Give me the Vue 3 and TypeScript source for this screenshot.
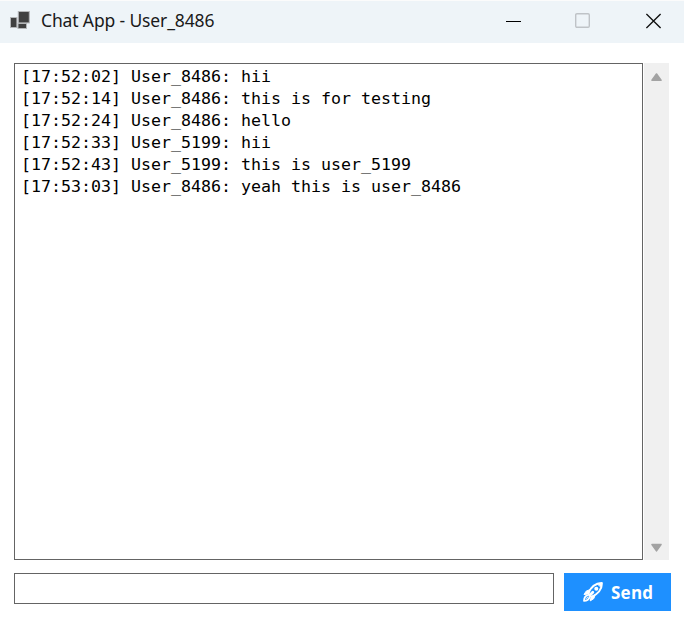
<script setup lang="ts">
import { ref } from 'vue'

interface Message {
  time: string
  user: string
  text: string
}

const title = 'Chat App - User_8486'
const draft = ref('')
const messages = ref<Message[]>([
  { time: '17:52:02', user: 'User_8486', text: 'hii' },
  { time: '17:52:14', user: 'User_8486', text: 'this is for testing' },
  { time: '17:52:24', user: 'User_8486', text: 'hello' },
  { time: '17:52:33', user: 'User_5199', text: 'hii' },
  { time: '17:52:43', user: 'User_5199', text: 'this is user_5199' },
  { time: '17:53:03', user: 'User_8486', text: 'yeah this is user_8486' },
])

function send(): void {
  const text = draft.value.trim()
  if (!text) return
  const time = new Date().toTimeString().slice(0, 8)
  messages.value.push({ time, user: 'User_8486', text })
  draft.value = ''
}
</script>

<template>
  <div class="window">
    <header class="titlebar">
      <svg class="app-icon" width="20" height="19" viewBox="0 0 20 19">
        <g fill="#404040" stroke="#b4b6b8" stroke-width="1">
          <rect x="0.5" y="6.5" width="6.4" height="10" />
          <rect x="8.3" y="0.5" width="11" height="11.4" />
          <rect x="8" y="12.5" width="8.5" height="5" />
        </g>
      </svg>
      <h1 class="title">{{ title }}</h1>
      <div class="controls">
        <svg width="16" height="16" viewBox="0 0 16 16"><path d="M0 8.5H15" stroke="#000" /></svg>
        <svg class="maximize" width="16" height="16" viewBox="0 0 16 16">
          <rect x="0.7" y="0.7" width="13.6" height="13.6" rx="1.2" fill="none" stroke="#bfc3c7" stroke-width="1.4" />
        </svg>
        <svg width="16" height="16" viewBox="0 0 16 16">
          <path d="M0.4 0.9L14.6 15.1M14.6 0.9L0.4 15.1" stroke="#111" stroke-width="1.4" />
        </svg>
      </div>
    </header>

    <main class="body">
      <section class="history">
        <div class="log">
          <p v-for="(m, i) in messages" :key="i" class="line">[{{ m.time }}] {{ m.user }}: {{ m.text }}</p>
        </div>
        <div class="scrollbar">
          <svg width="13" height="10" viewBox="0 0 13 10">
            <path d="M6.5 2L11 8.3H2Z" fill="#a3a3a3" stroke="#a3a3a3" stroke-width="1.6" stroke-linejoin="round" />
          </svg>
          <svg width="13" height="10" viewBox="0 0 13 10">
            <path d="M6.5 7.8L11 1.5H2Z" fill="#a3a3a3" stroke="#a3a3a3" stroke-width="1.6" stroke-linejoin="round" />
          </svg>
        </div>
      </section>

      <form class="composer" @submit.prevent="send">
        <input v-model="draft" class="entry" type="text" aria-label="Message" />
        <button class="send" type="submit">
          <svg width="20" height="20" viewBox="0 0 20 20" fill="none" stroke="#fff" stroke-linejoin="round" stroke-linecap="round">
            <path d="M5.2 11.6C7.5 5.5 12 1.2 18.9 1C19 7.2 14.3 12.3 8.4 15Z" stroke-width="1.8" />
            <path d="M14.3 1.6L18.9 1L18.6 5.4Z" fill="#fff" stroke-width="1" />
            <circle cx="13.3" cy="6.7" r="2" fill="#fff" stroke="none" />
            <path d="M6.9 7.6L3.1 9.2L1 12.6L5.4 11.9ZM12.2 13L10.8 16.6L7.2 18.9L8.1 14.8Z" fill="#fff" stroke-width="1" />
            <path d="M6.6 13.4L9.8 10.2" stroke-width="2.8" />
            <path d="M4.3 13.4C2.2 14 1.2 16 1 18.8C3.6 18.7 5.6 17.8 6.4 15.6" stroke-width="1.8" />
            <path d="M3.2 16.6L4.6 15.2" stroke-width="1" />
          </svg>
          <span class="send-label">Send</span>
        </button>
      </form>
    </main>
  </div>
</template>

<style>
body {
  margin: 0;
  background: #fff;
}
</style>

<style scoped>
.window {
  box-sizing: border-box;
  width: 684px;
  height: 625px;
  overflow: hidden;
  border-top: 1px solid #fbfbfb;
  background: #fff;
}

.titlebar {
  box-sizing: border-box;
  display: flex;
  align-items: center;
  height: 42px;
  padding: 0 22px 3px 10px;
  background: #eef4f8;
}

.app-icon {
  margin-right: 11px;
}

.title {
  margin: 0;
  padding-bottom: 2px;
  font: 400 17.5px/24px 'Noto Sans', 'Open Sans', sans-serif;
  letter-spacing: -0.14px;
  color: #1a1a1a;
  white-space: nowrap;
}

.controls {
  display: flex;
  margin-left: auto;
}

.maximize {
  margin: 0 55px 0 53px;
}

.body {
  padding: 20px 13px 0 14px;
}

.history {
  display: flex;
  gap: 1px;
  height: 497px;
}

.log {
  box-sizing: border-box;
  width: 629px;
  padding: 2px 6px;
  border: 1px solid #646464;
  overflow: hidden;
}

.line {
  margin: 0;
  font: 16.61px/22px 'DejaVu Sans Mono', monospace;
  color: #000;
  white-space: pre;
}

.scrollbar {
  box-sizing: border-box;
  display: flex;
  flex-direction: column;
  align-items: center;
  justify-content: space-between;
  width: 25px;
  padding: 9px 0 7px;
  background: #f0f0f0;
}

.composer {
  display: flex;
  align-items: flex-start;
  gap: 10px;
  margin-top: 13px;
}

.entry {
  box-sizing: border-box;
  width: 540px;
  height: 31px;
  padding: 0 6px;
  border: 1px solid #646464;
  border-radius: 0;
  outline: none;
  background: #fff;
  font: 16.61px 'DejaVu Sans Mono', monospace;
}

.send {
  display: flex;
  align-items: center;
  gap: 8px;
  width: 107px;
  height: 38px;
  padding: 0 0 0 19px;
  border: 0;
  background: #1e90ff;
  color: #fff;
}

.send-label {
  padding-top: 2px;
  font: 700 17px/24px 'Open Sans', 'Noto Sans', sans-serif;
  letter-spacing: 0.25px;
}
</style>
